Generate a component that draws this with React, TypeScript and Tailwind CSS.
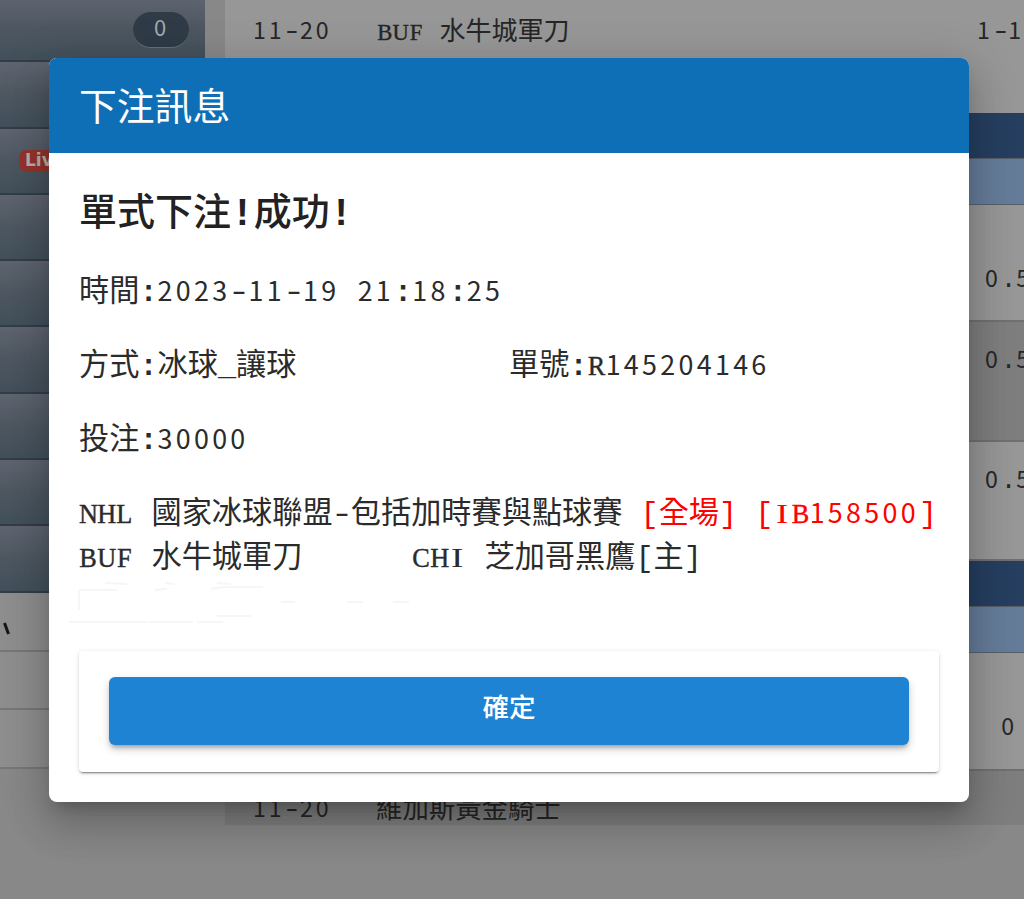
import clsx from "clsx";

// Splits a string so digits, capitals and punctuation keep the same fixed pitch
function Mono({ text }: { text: string }) {
  const parts = text.match(/[0-9]+|[A-Z]|[:!]|-|[^0-9A-Z:!-]+/g) ?? [];
  return (
    <>
      {parts.map((part, i) => {
        if (/[0-9]/.test(part)) {
          return (
            <span key={i} className="font-['Noto_Sans_CJK_TC',sans-serif] text-[0.89em] tracking-[0.123em]">
              {part}
            </span>
          );
        }
        if (/[A-Z]/.test(part)) {
          return (
            <span
              key={i}
              className={clsx(
                "inline-block w-[0.69em] text-center font-['Liberation_Serif',serif] text-[0.87em] leading-none",
                part === "I" ? "scale-x-140" : "[-webkit-text-stroke:0.4px_currentColor]"
              )}
            >
              {part}
            </span>
          );
        }
        if (part === "-") {
          return (
            <span key={i} className="inline-block scale-x-[1.3] leading-none">
              -
            </span>
          );
        }
        return (
          <span key={i} className={clsx(/[:!]/.test(part) && "font-bold")}>
            {part}
          </span>
        );
      })}
    </>
  );
}

function Sidebar() {
  return (
    <aside className="w-[205px] shrink-0 text-[#222]">
      <div className="-mt-[4px]">
        {[0, 1, 2, 3, 4, 5, 6, 7, 8].map((item) => (
          <div
            key={item}
            className="flex h-[66.3px] items-center border-b-2 border-[#333d48] bg-linear-to-b from-[#5f6570] via-[#4e5761] to-[#42505b]"
          >
            {item === 0 && (
              <span className="mt-1 ml-[133px] flex h-[36px] w-[56px] items-center justify-center rounded-full border-b border-[#65707a] bg-[#2f3b47] pb-1.5 pr-0.5 text-[22px] text-[#a5a9ad] font-['Noto_Sans_CJK_TC',sans-serif]">
                0
              </span>
            )}
            {item === 2 && (
              <span className="ml-[19px] flex h-[22px] w-[56px] items-center rounded-lg bg-[#96332c] pl-1.5 text-[17px] font-bold text-[#b5b0ae] font-['DejaVu_Sans',sans-serif]">
                Live
              </span>
            )}
          </div>
        ))}
      </div>
      <div className="flex h-[59px] items-center border-b-2 border-[#777] bg-[#8e8e8e]">
        <svg width="14" height="30" viewBox="0 0 14 30" className="mt-4">
          <path d="M4.5 9 L8.5 20" stroke="#161616" strokeWidth="3" />
        </svg>
      </div>
      <div className="h-[58.5px] border-b-2 border-[#777] bg-[#8e8e8e]" />
      <div className="h-[58.5px] border-b-2 border-[#777] bg-[#8e8e8e]" />
    </aside>
  );
}

function Odds({ value, className }: { value: string; className: string }) {
  return (
    <div className={clsx("flex justify-end overflow-hidden whitespace-nowrap border-b-2 border-[#707070] leading-[36px]", className)}>
      <span className="w-[39px]">
        <Mono text={value} />
      </span>
    </div>
  );
}

function LeagueBar() {
  return (
    <>
      <div className="h-[45px] bg-[#263f60]" />
      <div className="h-[47px] border-y border-[#555f6b] bg-[#657c99]" />
    </>
  );
}

function OddsTable() {
  return (
    <main className="ml-5 flex-1 overflow-hidden text-[26px] text-[#262626]">
      <div className="flex h-[113px] bg-[#979797] pt-[11px] leading-[36px] whitespace-nowrap">
        <div className="ml-7 w-[124px]">
          <Mono text="11-20" />
        </div>
        <div className="w-[600px] pt-[4px]">
          <p className="h-9">
            <Mono text="BUF 水牛城軍刀" />
          </p>
          <p className="mt-[5px] h-9">
            <Mono text="CHI 芝加哥黑鷹[主]" />
          </p>
        </div>
        <div>
          <Mono text="1-1" />
        </div>
      </div>
      <LeagueBar />
      <Odds value="0.5" className="h-[117px] bg-[#979797] pt-[54px]" />
      <Odds value="0.5" className="h-[120px] bg-[#7e7e7e] pt-[18px]" />
      <Odds value="0.5" className="h-[119px] bg-[#979797] pt-[18px]" />
      <LeagueBar />
      <div className="flex h-[118px] justify-end border-b-2 border-[#707070] bg-[#979797] pr-[7px] pt-[54px] leading-[36px]">
        <Mono text="0" />
      </div>
      <div className="flex h-[54px] bg-[#7e7e7e] pt-[18px] leading-[36px]">
        <div className="ml-7 w-[123px]">
          <Mono text="11-20" />
        </div>
        <div className="pt-[4px] text-[26.4px]">維加斯黃金騎士</div>
      </div>
    </main>
  );
}

function BetDialog() {
  return (
    <div
      role="dialog"
      className="h-[744px] w-[920px] overflow-hidden rounded-lg bg-white text-[#2b2b2b] shadow-[0_11px_15px_-7px_rgba(0,0,0,0.2),0_24px_38px_3px_rgba(0,0,0,0.14),0_9px_46px_8px_rgba(0,0,0,0.12)]"
    >
      <header className="flex h-[95px] items-center bg-[#0f6fb6] px-[30px] pt-[9px] text-[37.8px] text-white">
        下注訊息
      </header>
      <div className="px-[30px] pt-[34px] text-[30.2px] leading-[44px] whitespace-pre">
        <h2 className="h-[56px] text-[38px] leading-[56px] font-medium text-[#222]">
          <Mono text="單式下注!成功!" />
        </h2>
        <p className="mt-[25px] h-[44px]">
          <Mono text="時間:2023-11-19 21:18:25" />
        </p>
        <div className="mt-[30px] grid h-[44px] grid-cols-2 items-baseline">
          <p>
            <Mono text="方式:冰球_讓球" />
          </p>
          <p>
            <Mono text="單號:R145204146" />
          </p>
        </div>
        <p className="mt-[30px] h-[44px]">
          <Mono text="投注:30000" />
        </p>
        <p className="mt-[30px] h-[44px]">
          <Mono text="NHL 國家冰球聯盟-包括加時賽與點球賽 " />
          <span className="text-[#ff0000]">
            <Mono text="[全場] [IB158500]" />
          </span>
        </p>
        <div className="flex h-[44px] pt-[3px]">
          <p className="w-[333px]">
            <Mono text="BUF 水牛城軍刀" />
          </p>
          <p>
            <Mono text="CHI 芝加哥黑鷹[主]" />
          </p>
        </div>
        <svg width="350" height="48" viewBox="0 0 350 48" className="mt-px -ml-[10px]" fill="none" stroke="#f6f6f6" strokeWidth="2">
          <path d="M10 12 V31 M10 11 H48 M36 4 L58 5 M86 11 L98 10 M96 4 L106 5 M142 10 L155 8 H194 M148 4 L162 5 M212 23 H226 M278 23 H294 M324 23 H340 M148 37 H182 M0 43 H78 M80 43 H124 M128 43 H154" />
        </svg>
      </div>
      <div className="mx-[30px] mt-[24px] h-[121px] rounded bg-white px-[30px] pt-[26px] shadow-[0_3px_1px_-2px_rgba(0,0,0,0.3),0_2px_2px_0_rgba(0,0,0,0.14),0_1px_5px_0_rgba(0,0,0,0.12)]">
        <button className="flex h-[68px] w-full items-center justify-center rounded-md bg-[#1e83d2] text-[26.5px] font-medium text-white shadow-[0_4px_4px_-2px_rgba(0,0,0,0.25),0_4px_8px_0_rgba(0,0,0,0.2)]">
          確定
        </button>
      </div>
    </div>
  );
}

export default function App() {
  return (
    <div className="relative h-[899px] w-full overflow-hidden bg-[#888] font-['Liberation_Mono','Noto_Sans_CJK_TC',monospace]">
      <div className="flex h-full">
        <Sidebar />
        <OddsTable />
      </div>
      <div className="absolute inset-0 pl-[49px] pt-[58px]">
        <BetDialog />
      </div>
    </div>
  );
}
